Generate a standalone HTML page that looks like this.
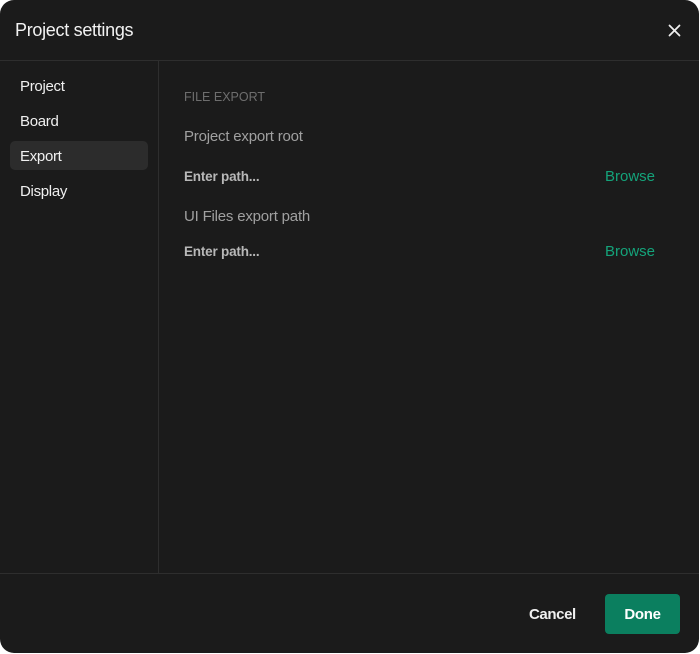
<!DOCTYPE html>
<html><head><meta charset="utf-8"><style>
html,body{margin:0;padding:0;background:#fff;}
body{width:700px;height:654px;position:relative;overflow:hidden;font-family:"Liberation Sans",sans-serif;}
.dlg{position:absolute;left:0;top:0;width:699px;height:653px;background:#1b1b1b;border-radius:14px;overflow:hidden;}
.t{position:absolute;white-space:nowrap;}
.hline{position:absolute;left:0;width:100%;height:1px;background:#2e2e2e;}
.vline{position:absolute;left:158px;top:61px;width:1px;height:512px;background:#2e2e2e;}
.nav{font-size:15px;color:#f0f0f0;left:20px;letter-spacing:-0.3px;}
.sel{position:absolute;left:10px;top:141px;width:138px;height:29px;background:#2c2c2c;border-radius:5px;}
.lbl{font-size:15px;color:#a0a0a0;left:184px;letter-spacing:-0.2px;}
.inp{font-size:13.5px;color:#b8b8b8;font-weight:bold;left:184px;letter-spacing:-0.2px;}
.br{font-size:15px;color:#14a37a;left:605px;}
.done{position:absolute;left:605px;top:594px;width:75px;height:40px;background:#0b7f5f;border-radius:4px;color:#fff;font-size:15px;font-weight:bold;line-height:41px;text-align:center;letter-spacing:-0.3px;}
</style></head><body>
<div class="dlg">
<div class="t" style="left:15px;top:20px;font-size:18px;color:#f2f2f2;letter-spacing:-0.3px;">Project settings</div>
<svg style="position:absolute;left:668px;top:24px" width="13" height="13" viewBox="0 0 13 13"><path d="M1.5 1.5L11.5 11.5M11.5 1.5L1.5 11.5" stroke="#eee" stroke-width="1.8" stroke-linecap="round"/></svg>
<div class="hline" style="top:60px"></div>
<div class="vline"></div>
<div class="sel"></div>
<div class="t nav" style="top:78px">Project</div>
<div class="t nav" style="top:113px">Board</div>
<div class="t nav" style="top:148px">Export</div>
<div class="t nav" style="top:183px">Display</div>
<div class="t" style="left:184px;top:90px;font-size:12.5px;color:#6e6e6e;">FILE EXPORT</div>
<div class="t lbl" style="top:128px">Project export root</div>
<div class="t inp" style="top:169px">Enter path...</div>
<div class="t br" style="top:168px">Browse</div>
<div class="t lbl" style="top:208px">UI Files export path</div>
<div class="t inp" style="top:244px">Enter path...</div>
<div class="t br" style="top:243px">Browse</div>
<div class="hline" style="top:573px"></div>
<div class="t" style="left:529px;top:606px;font-size:15px;color:#f0f0f0;font-weight:bold;letter-spacing:-0.4px;">Cancel</div>
<div class="done">Done</div>
</div>
</body></html>
